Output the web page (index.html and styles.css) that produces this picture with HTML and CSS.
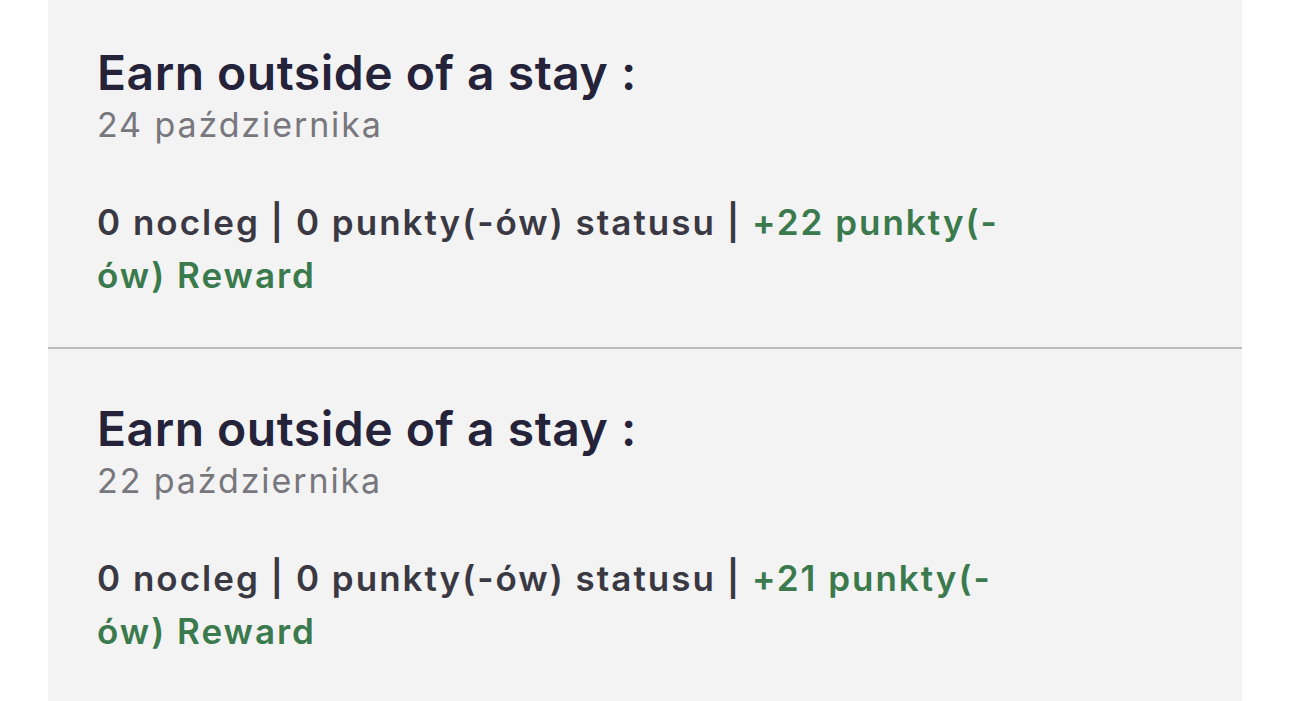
FILE: index.html
```html
<!DOCTYPE html>
<html lang="pl">
<head>
    <title>Historia punktów</title>
    <link rel="stylesheet" href="styles.css">
</head>
<body>
    <div class="list">
        <div class="item">
            <h2 class="title">Earn outside of a stay :</h2>
            <div class="date">24 października</div>
            <p class="summary">0 nocleg | 0 punkty(-ów) statusu | <span class="reward">+22 punkty(-<wbr>ów) Reward</span></p>
        </div>
        <div class="item">
            <h2 class="title">Earn outside of a stay :</h2>
            <div class="date">22 października</div>
            <p class="summary">0 nocleg | 0 punkty(-ów) statusu | <span class="reward">+21 punkty(-<wbr>ów) Reward</span></p>
        </div>
    </div>
</body>
</html>
```

FILE: styles.css
```css
body {
    margin: 0;
    background: #ffffff;
    font-family: Inter, "Noto Sans", sans-serif;
    overflow: hidden;
}
.list {
    margin: -7px 48px 0 48px;
    background: #f3f3f3;
}
.item {
    padding: 54px 49px 45px 49px;
    border-bottom: 2px solid #bdbdc0;
}
.item:last-child {
    border-bottom: none;
}
.title {
    margin: 0;
    font-size: 48px;
    line-height: 52px;
    font-weight: 600;
    letter-spacing: 0.5px;
    color: #24233a;
}
.date {
    font-size: 34px;
    line-height: 52px;
    letter-spacing: 1.9px;
    color: #77777d;
}
.summary {
    margin: 45px 0 0 0;
    max-width: 910px;
    font-size: 35px;
    line-height: 53px;
    font-weight: 600;
    letter-spacing: 2px;
    color: #3a3943;
}
.reward {
    color: #3a7a4c;
}
```
